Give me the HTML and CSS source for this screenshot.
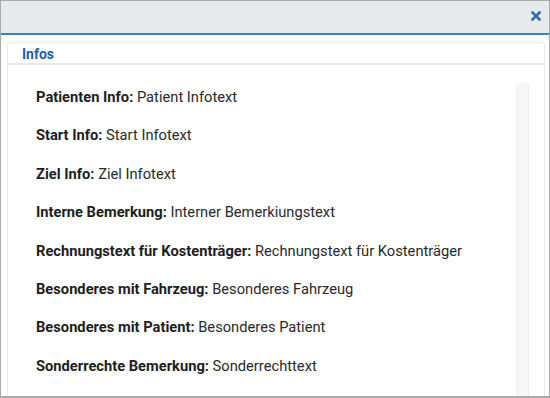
FILE: index.html
```html
<!DOCTYPE html>
<html lang="de">
<head>
    <meta charset="UTF-8">
    <meta name="viewport" content="width=device-width, initial-scale=1.0">
    <title>Infos</title>
    <link rel="stylesheet" href="styles.css">
</head>
<body>
    <div class="dialog">
        <div class="dialog-header">
            <button class="close" title="Schließen">
                <svg width="10" height="10" viewBox="0 0 10 10">
                    <path d="M1.5 1.5 L8.5 8.5 M8.5 1.5 L1.5 8.5" stroke="#2a6aae" stroke-width="2.6" stroke-linecap="square"/>
                </svg>
            </button>
        </div>
        <div class="dialog-body">
            <div class="panel">
                <div class="panel-heading">Infos</div>
                <div class="panel-body">
                    <div class="info-list">
                        <p><b>Patienten Info:</b> Patient Infotext</p>
                        <p><b>Start Info:</b> Start Infotext</p>
                        <p><b>Ziel Info:</b> Ziel Infotext</p>
                        <p><b>Interne Bemerkung:</b> Interner Bemerkiungstext</p>
                        <p><b>Rechnungstext für Kostenträger:</b> Rechnungstext für Kostenträger</p>
                        <p><b>Besonderes mit Fahrzeug:</b> Besonderes Fahrzeug</p>
                        <p><b>Besonderes mit Patient:</b> Besonderes Patient</p>
                        <p><b>Sonderrechte Bemerkung:</b> Sonderrechttext</p>
                    </div>
                    <div class="scroll-rail"></div>
                </div>
            </div>
        </div>
    </div>
</body>
</html>
```

FILE: styles.css
```css
*{
    margin:0;
    padding:0;
    box-sizing: border-box;
}
body{
    font-family: Roboto, "Liberation Sans", sans-serif;
    font-size: 14px;
    color:#222;
    background:#fff;
}
.dialog{
    width:550px;
    height:398px;
    border:1px solid #a9a9a9;
    border-bottom-width:2px;
    display:flex;
    flex-direction:column;
    overflow:hidden;
}
.dialog-header{
    height:34px;
    flex-shrink:0;
    background-color:#e7eaeb;
    border-bottom:2px solid #3a82c4;
    display:flex;
    justify-content:flex-end;
    align-items:center;
    padding-right:8px;
    padding-bottom:3px;
}
.close{
    border:none;
    background:none;
    width:10px;
    height:10px;
    display:flex;
}
.dialog-body{
    flex:1;
    padding:7px 4px 0 6px;
    min-height:0;
}
.panel{
    height:100%;
    border:1px solid #ececec;
    border-bottom:none;
    border-radius:3px 3px 0 0;
    box-shadow:0 0 2px rgba(0,0,0,0.06);
    display:flex;
    flex-direction:column;
}
.panel-heading{
    height:22px;
    padding:2px 0 0 14px;
    border-bottom:2px solid #e8e8e8;
    color:#1d5fa5;
    font-weight:bold;
    font-size:14px;
    line-height:18px;
}
.panel-body{
    flex:1;
    min-height:0;
    padding:18px 15px 0 0;
    display:flex;
}
.info-list{
    flex:1;
    overflow:hidden;
    padding:4px 0 0 28px;
    font-size:14.7px;
}
.scroll-rail{
    width:13px;
    background:#f7f7f7;
    border-left:1px solid #efefef;
    border-right:1px solid #efefef;
}
.info-list p{
    line-height:20px;
    height:38.4px;
    color:#2a2a2a;
    white-space:nowrap;
}
.info-list b{
    color:#1e1e1e;
    font-weight:bold;
}
```
